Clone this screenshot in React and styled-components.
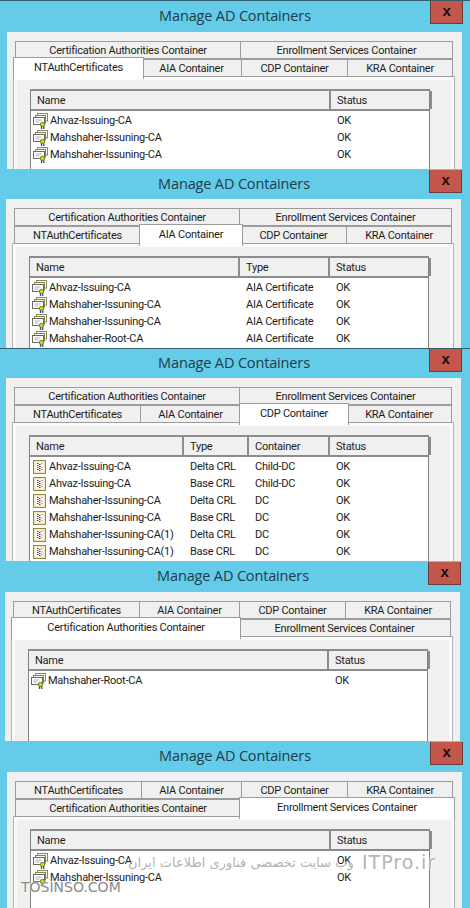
import React from 'react';
import styled, { createGlobalStyle } from 'styled-components';

const GlobalStyle = createGlobalStyle`
  html, body {
    margin: 0;
    padding: 0;
    background: #fff;
  }
  #root {
    width: 470px;
    height: 908px;
    overflow: hidden;
  }
`;

const Page = styled.div`
  position: relative;
  width: 470px;
  height: 908px;
  overflow: hidden;
  font-family: Roboto, "Noto Sans", sans-serif;
  font-size: 11px;
  letter-spacing: -0.25px;
  color: #1c1c1c;
`;

/* one dialog, the height is how much of it is still visible */
const Window = styled.section`
  box-sizing: border-box;
  height: ${p => p.$height}px;
  padding-left: ${p => p.$left}px;
  background: #64cbe9;
  overflow: hidden;
  border-top: 1px solid ${p => (p.$edge ? '#35606e' : '#64cbe9')};
`;

const Frame = styled.div`
  position: relative;
  width: 455px;
  height: 100%;
  display: flex;
  flex-direction: column;
`;

const TitleBar = styled.header`
  flex: none;
  height: ${p => p.$bar}px;
  display: flex;
  align-items: center;
  justify-content: center;
  padding: 0 0 ${p => p.$lift}px 1px;
  box-sizing: border-box;
  font-family: "Open Sans", sans-serif;
  font-size: 14.5px;
  letter-spacing: -0.15px;
  color: #1d3d4a;
`;

const CloseButton = styled.div`
  position: absolute;
  top: 0;
  right: -1px;
  width: 33px;
  height: 23px;
  box-sizing: border-box;
  display: flex;
  align-items: center;
  justify-content: center;
  padding-bottom: 3px;
  background: #c4574b;
  border: 1px solid #6a3d38;
  border-top: 0;
  color: #111;
  font-family: "Liberation Sans", sans-serif;
  font-weight: 700;
  font-size: 15px;
`;

const Client = styled.div`
  flex: 1;
  min-height: 0;
  background: #f0f0f0;
  padding-top: 9px;
  overflow: hidden;
`;

const Tabs = styled.div`
  margin: 0 9px 0 8px;
  display: flex;
  flex-direction: column;
`;

const TabRow = styled.div`
  display: grid;
  grid-template-columns: ${p => p.$cols};
  height: 18px;
`;

const Tab = styled.div`
  position: relative;
  box-sizing: border-box;
  display: flex;
  align-items: center;
  justify-content: center;
  padding-top: 1px;
  background: ${p => (p.$active ? '#fff' : '#f0f0f0')};
  border: 1px solid #9c9c9c;
  border-left-width: ${p => (p.$active || p.$first ? 1 : 0)}px;
  z-index: ${p => (p.$active ? 2 : 1)};
  ${p => p.$active && `
    margin: -2px -2px -2px -2px;
    padding-top: 0;
    padding-bottom: 3px;
    border-bottom: 0;
    height: 22px;
  `}
`;

const Panel = styled.div`
  box-sizing: border-box;
  margin: -1px 0 0 6px;
  width: 442px;
  height: 400px;
  padding: 12px 24px 0 16px;
  background: #f0f0f0;
  border: 1px solid #b4b4b4;
  box-shadow: inset 0 0 0 3px #fbfbfb;
`;

const List = styled.div`
  height: 380px;
  background: #fff;
  border: 1px solid #808080;
  border-top: 2px solid #8c8c8c;
`;

const Header = styled.div`
  display: grid;
  grid-template-columns: ${p => p.$cols};
  height: 18px;
  margin-bottom: 1px;
  border-bottom: 2px solid #8c8c8c;
  background: #f0f0f0;
`;

const HeadCell = styled.div`
  display: flex;
  align-items: center;
  padding: 1px 0 0 6px;
  border-right: 2px solid #8c8c8c;
`;

const Row = styled.div`
  display: grid;
  grid-template-columns: ${p => p.$cols};
  height: 17px;
  align-items: center;
`;

const NameCell = styled.div`
  display: flex;
  align-items: center;
  gap: 1px;
  padding-left: 2px;
  white-space: nowrap;
`;

const Cell = styled.div`
  padding-left: 6px;
  white-space: nowrap;
`;

const Watermark = styled.div`
  position: absolute;
  left: ${p => p.$x}px;
  top: ${p => p.$y}px;
  white-space: nowrap;
  font-family: "DejaVu Sans", sans-serif;
  font-size: ${p => p.$size}px;
  letter-spacing: ${p => p.$spacing}px;
  color: ${p => p.$color};
  text-shadow: 0 0 2px #fff, 1px 1px 0 rgba(255, 255, 255, 0.8);
  z-index: 5;
`;

const CertIcon = () => (
  <svg width="16" height="16" viewBox="0 0 16 16">
    <rect x="4.5" y="0.5" width="10" height="7.5" fill="#fbfaf0" stroke="#8c8a5a" />
    <rect x="2.5" y="2.5" width="10" height="7.5" fill="#fdfdf6" stroke="#85835a" />
    <rect x="0.5" y="4.5" width="11" height="7" fill="#fff" stroke="#6a6a62" />
    <path d="M2.5 7h6M2.5 9h4" stroke="#b0b0b0" />
    <circle cx="9.5" cy="11.5" r="2.2" fill="#d8d414" stroke="#6f8218" />
    <path d="M8.5 13.5v2.5M10.8 13.5v2.5" stroke="#2350a0" strokeWidth="1.3" />
  </svg>
);

const CrlIcon = () => (
  <svg width="16" height="16" viewBox="0 0 16 16">
    <rect x="1.5" y="1.5" width="12" height="13" fill="#efe9b8" stroke="#8f8a48" />
    <rect x="3.5" y="3.5" width="8" height="9" fill="#fff" />
    <path d="M5 4h1.5v1H5zM5 6h1.5v1H5zM5 8h1.5v1H5zM5 10h1.5v1H5zM7 5h1.5v1H7zM7 7h1.5v1H7zM7 9h1.5v1H7zM7 11h1.5v1H7z" fill="#8a1a28" />
    <path d="M9 4.5h1.5M9 8h1.5M9 10.5h1.5" stroke="#a0a0a0" />
  </svg>
);

const BACK = [
  { id: 'ca', label: 'Certification Authorities Container' },
  { id: 'es', label: 'Enrollment Services Container' },
];
const FRONT = [
  { id: 'nt', label: 'NTAuthCertificates' },
  { id: 'aia', label: 'AIA Container' },
  { id: 'cdp', label: 'CDP Container' },
  { id: 'kra', label: 'KRA Container' },
];
const BACK_COLS = '226px 212px';
const FRONT_COLS = '127px 100px 106px 105px';

const ISS = 'Mahshaher-Issuning-CA';

const WINDOWS = [
  {
    height: 169, left: 7, bar: 31, lift: 2, edge: true, active: 'nt', icon: CertIcon,
    cols: '300px 101px', heads: ['Name', 'Status'],
    rows: [
      ['Ahvaz-Issuing-CA', 'OK'],
      [ISS, 'OK'],
      [ISS, 'OK'],
    ],
  },
  {
    height: 179, left: 6, bar: 29, lift: 3, active: 'aia', icon: CertIcon,
    cols: '210px 90px 101px', heads: ['Name', 'Type', 'Status'],
    rows: [
      ['Ahvaz-Issuing-CA', 'AIA Certificate', 'OK'],
      [ISS, 'AIA Certificate', 'OK'],
      [ISS, 'AIA Certificate', 'OK'],
      ['Mahshaher-Root-CA', 'AIA Certificate', 'OK'],
    ],
  },
  {
    height: 213, left: 6, bar: 29, lift: 3, edge: true, active: 'cdp', icon: CrlIcon,
    cols: '154px 65px 81px 101px', heads: ['Name', 'Type', 'Container', 'Status'],
    rows: [
      ['Ahvaz-Issuing-CA', 'Delta CRL', 'Child-DC', 'OK'],
      ['Ahvaz-Issuing-CA', 'Base CRL', 'Child-DC', 'OK'],
      [ISS, 'Delta CRL', 'DC', 'OK'],
      [ISS, 'Base CRL', 'DC', 'OK'],
      [ISS + '(1)', 'Delta CRL', 'DC', 'OK'],
      [ISS + '(1)', 'Base CRL', 'DC', 'OK'],
    ],
  },
  {
    height: 180, left: 5, bar: 30, lift: 3, active: 'ca', flip: true, icon: CertIcon,
    cols: '300px 101px', heads: ['Name', 'Status'],
    rows: [['Mahshaher-Root-CA', 'OK']],
  },
  {
    height: 167, left: 7, bar: 30, lift: 3, active: 'es', flip: true, icon: CertIcon,
    cols: '300px 101px', heads: ['Name', 'Status'],
    rows: [
      ['Ahvaz-Issuing-CA', 'OK'],
      [ISS, 'OK'],
    ],
  },
];

function TabStrip({ tabs, cols, active }) {
  return (
    <TabRow $cols={cols}>
      {tabs.map((t, i) => (
        <Tab key={t.id} $active={t.id === active} $first={i === 0}>{t.label}</Tab>
      ))}
    </TabRow>
  );
}

function Dialog({ win }) {
  const Icon = win.icon;
  return (
    <Window $height={win.height} $left={win.left} $edge={win.edge}>
      <Frame>
        <TitleBar $bar={win.bar} $lift={win.lift}>Manage AD Containers</TitleBar>
        <CloseButton>x</CloseButton>
        <Client>
          <Tabs>
            {win.flip ? (
              <>
                <TabStrip tabs={FRONT} cols={FRONT_COLS} active={win.active} />
                <TabStrip tabs={BACK} cols={BACK_COLS} active={win.active} />
              </>
            ) : (
              <>
                <TabStrip tabs={BACK} cols={BACK_COLS} active={win.active} />
                <TabStrip tabs={FRONT} cols={FRONT_COLS} active={win.active} />
              </>
            )}
          </Tabs>
          <Panel>
            <List>
              <Header $cols={win.cols}>
                {win.heads.map(h => <HeadCell key={h}>{h}</HeadCell>)}
              </Header>
              {win.rows.map((row, i) => (
                <Row key={i} $cols={win.cols}>
                  <NameCell><Icon />{row[0]}</NameCell>
                  {row.slice(1).map((c, j) => <Cell key={j}>{c}</Cell>)}
                </Row>
              ))}
            </List>
          </Panel>
        </Client>
      </Frame>
    </Window>
  );
}

export default function App() {
  return (
    <Page>
      <GlobalStyle />
      {WINDOWS.map((w, i) => <Dialog key={i} win={w} />)}
      <Watermark $x={128} $y={855} $size={13} $spacing={0} $color="#b4b4b4">
        {'\u0648\u0628 \u0633\u0627\u06CC\u062A \u062A\u062E\u0635\u0635\u06CC \u0641\u0646\u0627\u0648\u0631\u06CC \u0627\u0637\u0644\u0627\u0639\u0627\u062A \u0627\u06CC\u0631\u0627\u0646'}
      </Watermark>
      <Watermark $x={362} $y={851} $size={19} $spacing={1} $color="#b4b4b4">ITPro.ir</Watermark>
      <Watermark $x={21} $y={879} $size={14} $spacing={0} $color="#8a8a8a">TOSINSO.COM</Watermark>
    </Page>
  );
}
